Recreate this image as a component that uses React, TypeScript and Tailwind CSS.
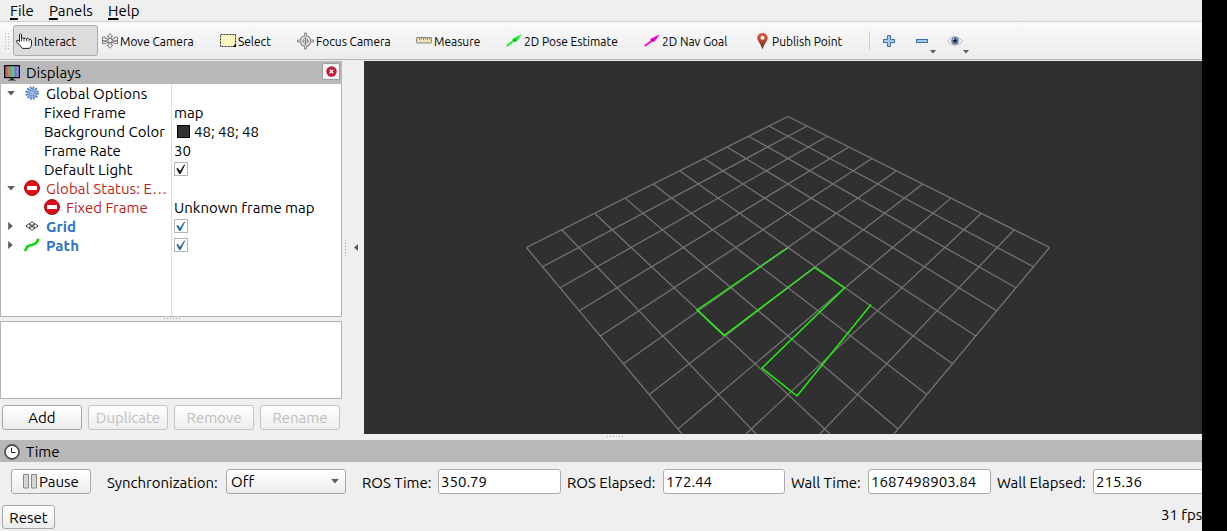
import React from "react";

const HORIZON = -202.5;
const DEPTH = 34.35;

function project(i: number, j: number): [number, number] {
  const d = DEPTH - (i + j);
  return [788 + ((i - j) * 636.8) / d - 364, HORIZON + 10957 / d - 61];
}

function line(a: [number, number], b: [number, number]) {
  return `M${a[0].toFixed(2)} ${a[1].toFixed(2)}L${b[0].toFixed(2)} ${b[1].toFixed(2)}`;
}

const steps = Array.from({ length: 11 }, (_, n) => n);
const gridPath = steps
  .map((n) => line(project(n, 0), project(n, 10)) + line(project(0, n), project(10, n)))
  .join("");

function Viewport() {
  return (
    <svg className="block h-[373px] w-[838px] bg-[#303030]" viewBox="0 0 838 373">
      <path d={gridPath} fill="none" stroke="#757575" strokeWidth="1.25" />
      <path
        d="M424 186.5L333 249L360 274.5L450.5 206.5L480.5 227L398 307L433 335L507 243.5"
        fill="none"
        stroke="#1ef80a"
        strokeWidth="1.4"
      />
      <path d="M424 186.5L393 207.8M418 231L450.5 206.5" stroke="#4fc843" strokeWidth="1.4" />
    </svg>
  );
}

function HandIcon() {
  return (
    <svg className="size-4 shrink-0" viewBox="0 0 16 16">
      <path d="M3.500 8.500V1.500Q4.500-.3 5.500 1.500V5.500Q7 4.300 8 5.500Q9.500 4.500 10.5 5.800Q12 5 13 6.200Q15.500 5.700 15.500 8V12.500L13.500 15.400H6.500L3.500 12L.7 9Q.2 6.600 2 7.200Z" fill="#fff" stroke="#222" strokeLinejoin="round" />
      <path d="M5.500 5.500v3M8 5.500V8.500M10.500 6v2.500M13 6.500v2" stroke="#222" strokeWidth=".8" />
    </svg>
  );
}

function MoveIcon() {
  return (
    <svg className="size-4 shrink-0" viewBox="0 0 16 16" fill="#f4f4f4" stroke="#707070" strokeWidth=".9">
      <path d="M8 .5L10.7 3.5H9.2V12H10.7L8 15.3L5.3 12H6.8V3.5H5.3Z" />
      <path d="M.5 4.2L3.5 4.2L3 5.2L8 7L13 5.2L12.5 4.2L15.5 4.2V8.5L14 8L8 10L2 8L.5 8.5Z" />
      <path d="M.5 10.8V7L3 8L8 6L13 8L15.5 7V10.8L12.5 10.3L8 8.5L3.5 10.3Z" fill="none" />
      <circle cx="8" cy="7.5" r="2.2" />
    </svg>
  );
}

function SelectIcon() {
  return (
    <svg className="size-4 shrink-0" viewBox="0 0 16 16">
      <rect x=".5" y="1.5" width="15" height="12" fill="#fff6bd" stroke="#333" strokeDasharray="2 1" />
      <path d="M12.5 14L16 10.5V14Z" fill="#000" />
    </svg>
  );
}

function FocusIcon() {
  return (
    <svg className="h-[18px] w-[17px] shrink-0" viewBox="0 0 17 18" fill="none" stroke="#8a8a8a">
      <circle cx="8.5" cy="9" r="5.2" strokeWidth="1.3" />
      <circle cx="8.5" cy="9" r="2.7" strokeWidth="1" />
      <path d="M8.5 5v8M4.5 9h8" />
      <path d="M7.5 4V1h2v3M7.5 14v3h2v-3M3.5 8h-3v2h3M13.5 8h3v2h-3" fill="#ddd" />
    </svg>
  );
}

function MeasureIcon() {
  return (
    <svg className="h-[7px] w-4 shrink-0" viewBox="0 0 16 7">
      <rect x=".5" y=".5" width="15" height="5.5" rx=".5" fill="#efe2ae" stroke="#858585" />
      <path d="M3.5 1v2M5.5 1v1.5M7.5 1v2M9.5 1v1.5M11.5 1v2M13.5 1v1.5" stroke="#777" strokeWidth=".8" />
    </svg>
  );
}

function ArrowIcon({ color, dark }: { color: string; dark: string }) {
  return (
    <svg className="h-[13px] w-4 shrink-0" viewBox="0 0 16 13">
      <path d="M.8 12L7.5 7" stroke={color} strokeWidth="2" />
      <path d="M16 .3L10.5 7.8L9 6.9L6 6.3L7 4.6Z" fill={color} />
      <path d="M7 6L9.5 5.2L9.5 7.6L8 7.4Z" fill={dark} />
    </svg>
  );
}

function PinIcon() {
  return (
    <svg className="h-4 w-[11px] shrink-0" viewBox="0 0 11 16">
      <defs>
        <linearGradient id="pin" x2="0" y2="1">
          <stop stopColor="#e0583a" />
          <stop offset=".5" stopColor="#b5482f" />
          <stop offset="1" stopColor="#4a3520" />
        </linearGradient>
      </defs>
      <path d="M5.5 0C2.5 0 .3 2.2.3 5C.3 8 4 11 5.2 15.8H5.8C7 11 10.7 8 10.7 5C10.7 2.2 8.5 0 5.5 0Z" fill="url(#pin)" />
      <circle cx="5.5" cy="4.8" r="2" fill="#fff" />
    </svg>
  );
}

function PlusIcon() {
  return (
    <svg className="size-3 shrink-0" viewBox="0 0 12 12">
      <path d="M4.5.5h3v4h4v3h-4v4h-3v-4h-4v-3h4z" fill="#a9c9ea" stroke="#3b6eae" />
    </svg>
  );
}

function MinusIcon() {
  return (
    <svg className="h-1 w-3 shrink-0" viewBox="0 0 12 4">
      <rect x=".5" y=".5" width="11" height="3" fill="#a9c9ea" stroke="#3b6eae" />
    </svg>
  );
}

function EyeIcon() {
  return (
    <svg className="h-[10px] w-4 shrink-0" viewBox="0 0 16 10">
      <path d="M.4 5Q8-4 15.6 5Q8 13.5 .4 5Z" fill="#f7f7f5" stroke="#aaa" strokeWidth=".9" />
      <circle cx="8" cy="4.8" r="3.5" fill="#6c7fbc" stroke="#52639b" strokeWidth=".6" />
      <circle cx="8" cy="4.8" r="1.7" fill="#11152b" />
      <circle cx="6.5" cy="3.3" r=".8" fill="#dfe5ff" />
    </svg>
  );
}

function Triangle({ className, d = "M0 0H6L3 3.6Z", box = "0 0 6 4" }: { className: string; d?: string; box?: string }) {
  return (
    <svg className={className} viewBox={box}>
      <path d={d} fill="#5a5a5a" />
    </svg>
  );
}

function MonitorIcon() {
  return (
    <svg className="size-4" viewBox="0 0 16 16">
      <defs>
        <linearGradient id="screen">
          <stop stopColor="#a94e4e" />
          <stop offset=".33" stopColor="#d08080" />
          <stop offset=".36" stopColor="#58a868" />
          <stop offset=".64" stopColor="#80c88c" />
          <stop offset=".68" stopColor="#6d6dc4" />
          <stop offset="1" stopColor="#9b9be0" />
        </linearGradient>
      </defs>
      <rect x=".6" y=".6" width="14.8" height="12" fill="url(#screen)" stroke="#080808" strokeWidth="1.2" />
      <path d="M6.5 13h3v1.2l3 1.3h-9l3-1.3z" fill="#222" />
    </svg>
  );
}

function GearIcon() {
  return (
    <svg className="mb-px size-[14px]" viewBox="0 0 14 14" fill="none">
      <circle cx="7" cy="7" r="5.7" stroke="#4f81bd" strokeWidth="2.2" strokeDasharray="1.7 1.284" />
      <circle cx="7" cy="7" r="4.7" fill="#a3c5ea" stroke="#5a8ac6" strokeWidth=".9" />
      <circle cx="7" cy="7" r="2.9" stroke="#4477b5" strokeWidth="1.1" strokeDasharray="1.3 .98" />
      <circle cx="7" cy="7" r="1.2" fill="#f4f8fd" stroke="#5584bf" strokeWidth=".7" />
    </svg>
  );
}

function ErrorIcon() {
  return (
    <svg className="size-4" viewBox="0 0 16 16">
      <circle cx="8" cy="8" r="7.5" fill="#dc1018" stroke="#a8080e" />
      <rect x="3" y="6" width="10" height="4" rx=".6" fill="#fff" />
    </svg>
  );
}

function GridIcon() {
  return (
    <svg className="h-[10px] w-[14px]" viewBox="0 0 14 10" fill="none" stroke="#444" strokeWidth="1">
      <path d="M.8 5L7 .8L13.2 5L7 9.2ZM3.9 2.9L10.1 7.1M10.1 2.9L3.9 7.1" />
      <path d="M4 5L7 3L10 5L7 7Z" strokeWidth=".5" />
    </svg>
  );
}

function PathIcon() {
  return (
    <svg className="h-[14px] w-4" viewBox="0 0 16 14" fill="none" stroke="#0bd80b" strokeWidth="2.7">
      <path d="M1.200 13C2.200 8.500 4.5 7.5 7.5 7C11.5 6.4 13 5 14.5 .8" />
    </svg>
  );
}

function Check({ color }: { color: string }) {
  return (
    <svg className="mb-[2px] size-[14px]" viewBox="0 0 14 14">
      <rect x=".5" y=".5" width="13" height="13" fill="#fff" stroke="#b4b4b4" />
      <path d="M3.4 6L6 9.5L10.6 2.8L6.4 11.6H5.4L3 7Z" fill={color} stroke={color} strokeWidth=".9" />
    </svg>
  );
}

type Row = {
  arrow?: "down" | "right";
  icon?: React.ReactNode;
  label: string;
  labelClass: string;
  value?: React.ReactNode;
};

const rows: Row[] = [
  { arrow: "down", icon: <GearIcon />, label: "Global Options", labelClass: "pl-[45px] text-black tracking-[0.07px]" },
  { label: "Fixed Frame", labelClass: "pl-[43px] text-black", value: "map" },
  {
    label: "Background Color",
    labelClass: "pl-[43px] text-black tracking-[0.05px]",
    value: (
      <span className="flex items-center gap-1 pl-[3px]">
        <span className="size-[13px] border border-black bg-[#303030]" />
        <span>48; 48; 48</span>
      </span>
    ),
  },
  { label: "Frame Rate", labelClass: "pl-[43px] text-black", value: "30" },
  { label: "Default Light", labelClass: "pl-[43px] text-black", value: <Check color="#111" /> },
  { arrow: "down", icon: <ErrorIcon />, label: "Global Status: E…", labelClass: "pl-[45px] text-[#c41e20] tracking-[0.1px]" },
  { label: "Fixed Frame", labelClass: "gap-[6px] pl-[43px] text-[#c41e20]", value: "Unknown frame map" },
  { arrow: "right", icon: <GridIcon />, label: "Grid", labelClass: "pl-[45px] font-bold text-[#2a76c6] tracking-[0.1px]", value: <Check color="#2465a4" /> },
  { arrow: "right", icon: <PathIcon />, label: "Path", labelClass: "pl-[45px] font-bold text-[#2a76c6] tracking-[0.1px]", value: <Check color="#2465a4" /> },
];

function TreeRow({ row, nestedError }: { row: Row; nestedError: boolean }) {
  return (
    <div className="flex h-[19px] shrink-0">
      <div className={`relative flex w-[170px] shrink-0 items-center ${row.labelClass}`}>
        {row.arrow === "down" && <Triangle className="absolute left-[6px] top-[7px] h-[5px] w-2" />}
        {row.arrow === "right" && (
          <Triangle className="absolute left-[7px] top-[5px] h-2 w-[5px]" d="M0 0L4 3.5L0 7Z" box="0 0 4 7" />
        )}
        {row.icon && (
          <span className="absolute left-[22px] top-0 flex h-[18px] w-[18px] items-center justify-center">{row.icon}</span>
        )}
        {nestedError && <span className="mb-[2px]"><ErrorIcon /></span>}
        <span>{row.label}</span>
      </div>
      <div className="flex items-center border-l border-[#dcdcdc] pl-[2px]">{row.value}</div>
    </div>
  );
}

function Dots({ className }: { className: string }) {
  return (
    <div className={`flex ${className}`}>
      {[0, 1, 2, 3, 4, 5].map((n) => (
        <span key={n} className="size-px bg-[#a5a5a5]" />
      ))}
    </div>
  );
}

const buttonBase =
  "flex items-center rounded-[3px] border bg-linear-to-b from-white to-[#ededed]";

const mnemonic = "underline decoration-[1.5px] underline-offset-2";

function Tool({ icon, label, className }: { icon: React.ReactNode; label: string; className: string }) {
  return (
    <div className={`flex h-[31px] shrink-0 items-center ${className}`}>
      {icon}
      <span className="origin-left scale-x-[0.92] pt-px">{label}</span>
    </div>
  );
}

function Field({ label, value, labelClass, inputClass }: { label: string; value: string; labelClass: string; inputClass: string }) {
  return (
    <>
      <span className={`shrink-0 pt-[2px] ${labelClass}`}>{label}</span>
      <div className={`flex h-[25px] shrink-0 items-center rounded-[3px] border border-[#ababab] bg-white pl-[2px] ${inputClass}`}>
        {value}
      </div>
    </>
  );
}

export default function App() {
  return (
    <div className="flex h-[531px] w-[1227px] overflow-hidden whitespace-nowrap bg-black font-['Ubuntu','Noto_Sans',sans-serif] text-[15px] leading-[19px] text-black">
      <div className="flex w-[1202px] flex-col overflow-hidden bg-[#efefef]">
        <nav className="flex h-[22px] shrink-0 items-center border-b border-[#d2d2d2] pl-[10px]">
          <span className="w-[39px]"><span className={mnemonic}>F</span>ile</span>
          <span className="w-[59px]"><span className={mnemonic}>P</span>anels</span>
          <span><span className={mnemonic}>H</span>elp</span>
        </nav>

        <div className="flex h-[38px] shrink-0 items-center border-b border-[#b3b3b3] bg-linear-to-b from-[#fafafa] to-[#ececec] text-[13px]">
          <div className="grid w-[13px] shrink-0 grid-cols-2 gap-x-[2px] gap-y-[2px] pl-[5px] pr-[4px]">
            {Array.from({ length: 12 }, (_, n) => (
              <span key={n} className="size-px bg-[#b5b5b5]" />
            ))}
          </div>
          <Tool icon={<HandIcon />} label="Interact" className="w-[85px] gap-[2px] rounded-[3px] border border-[#ababab] bg-[#dcdcdc] pl-[2px]" />
          <Tool icon={<MoveIcon />} label="Move Camera" className="w-[122px] gap-[2px] pl-1" />
          <Tool icon={<SelectIcon />} label="Select" className="w-[77px] gap-[2px]" />
          <Tool icon={<FocusIcon />} label="Focus Camera" className="w-[119px] gap-[2px]" />
          <Tool icon={<MeasureIcon />} label="Measure" className="w-[90px] gap-[2px]" />
          <Tool icon={<ArrowIcon color="#12ef25" dark="#087e16" />} label="2D Pose Estimate" className="w-[138px] gap-[2px]" />
          <Tool icon={<ArrowIcon color="#f708df" dark="#850a79" />} label="2D Nav Goal" className="w-[113px] gap-[2px]" />
          <Tool icon={<PinIcon />} label="Publish Point" className="w-[112px] gap-1" />
          <div className="h-[19px] w-px bg-[#cfcfcf]" />
          <div className="flex w-[46px] pl-[13px]"><PlusIcon /></div>
          <div className="relative flex h-6 w-[31px] items-center">
            <MinusIcon />
            <Triangle className="absolute bottom-[-1px] left-[14px] h-[4px] w-[6px]" />
          </div>
          <div className="relative flex h-6 w-8 items-center">
            <EyeIcon />
            <Triangle className="absolute bottom-[-1px] left-[16px] h-[4px] w-[6px]" />
          </div>
        </div>

        <div className="flex h-[380px] shrink-0 pt-px">
          <aside className="flex w-[342px] shrink-0 flex-col">
            <div className="flex h-[23px] items-center bg-[#b8b8b8] pl-1">
              <MonitorIcon />
              <span className="ml-[6px]">Displays</span>
              <div className="mr-[2px] mb-[2px] ml-auto flex h-[17px] w-[18px] items-center justify-center rounded-[2px] border border-[#9d9d9d] bg-[#f5f5f5]">
                <svg className="size-[11px]" viewBox="0 0 11 11">
                  <circle cx="5.5" cy="5.5" r="5.2" fill="#c91837" />
                  <path d="M3.8 3.8l3.4 3.4M7.2 3.8L3.8 7.2" stroke="#fff" strokeWidth="1.4" />
                </svg>
              </div>
            </div>
            <div className="flex h-[233px] flex-col border border-t-0 border-[#b4b4b4] bg-white">
              {rows.map((row, n) => (
                <TreeRow key={n} row={row} nestedError={n === 6} />
              ))}
              <div className="ml-[170px] flex-1 border-l border-[#dcdcdc]" />
            </div>
            <Dots className="mb-px h-[3px] items-center gap-[2px] pl-[164px]" />
            <div className="h-[78px] border border-[#b4b4b4] bg-white" />
            <div className="flex gap-[6px] px-[2px] pt-[6px]">
              <div className={`${buttonBase} h-[25px] w-20 justify-center border-[#a8a8a8]`}>Add</div>
              <div className={`${buttonBase} h-[25px] w-20 justify-center border-[#c5c5c5] text-[#bfbfbf]`}>Duplicate</div>
              <div className={`${buttonBase} h-[25px] w-20 justify-center border-[#c5c5c5] text-[#bfbfbf]`}>Remove</div>
              <div className={`${buttonBase} h-[25px] w-20 justify-center border-[#c5c5c5] text-[#bfbfbf]`}>Rename</div>
            </div>
          </aside>
          <div className="flex w-[22px] shrink-0 items-center gap-2 pb-[6px] pl-[3px]">
            <Dots className="flex-col gap-[2px]" />
            <Triangle className="h-[7px] w-1" d="M4 0L0 3.5L4 7Z" box="0 0 4 7" />
          </div>
          <main className="w-[838px] shrink-0">
            <Viewport />
            <Dots className="h-1 items-center gap-[2px] pl-[243px]" />
          </main>
        </div>

        <div className="flex h-[22px] shrink-0 items-center bg-[#b8b8b8] pl-1">
          <svg className="mt-px size-4" viewBox="0 0 16 16">
            <circle cx="8" cy="8" r="7" fill="#fff" stroke="#555" strokeWidth="1.8" />
            <path d="M7.5 3.8V8.5H11.5" fill="none" stroke="#222" />
          </svg>
          <span className="ml-[6px]">Time</span>
        </div>
        <div className="flex h-[39px] shrink-0 items-center pl-[11px]">
          <div className={`${buttonBase} h-[25px] w-20 shrink-0 gap-[2px] border-[#a8a8a8] pl-[11px]`}>
            <svg className="h-[15px] w-[14px]" viewBox="0 0 14 15" fill="#d5d6d2" stroke="#888a85">
              <path d="M.5.5h5v13.5h-5zM8.5.5h5v13.5h-5z" />
            </svg>
            Pause
          </div>
          <span className="ml-4 w-[119px] shrink-0 pt-[2px]">Synchronization:</span>
          <div className={`${buttonBase} h-[25px] w-[120px] shrink-0 justify-between border-[#a8a8a8] pr-[6px] pl-1`}>
            Off
            <Triangle className="h-[5px] w-2" />
          </div>
          <Field label="ROS Time:" value="350.79" labelClass="ml-4 w-[76px]" inputClass="w-[123px]" />
          <Field label="ROS Elapsed:" value="172.44" labelClass="ml-[6px] w-[96px]" inputClass="w-[122px]" />
          <Field label="Wall Time:" value="1687498903.84" labelClass="ml-[6px] w-[77px]" inputClass="w-[123px]" />
          <Field label="Wall Elapsed:" value="215.36" labelClass="ml-[6px] w-[96px]" inputClass="w-[123px]" />
        </div>
        <div className="flex h-[30px] shrink-0 items-start justify-between pt-1 pl-[2px]">
          <div className={`${buttonBase} h-6 w-[53px] justify-center border-[#a8a8a8]`}>Reset</div>
          <span className="w-[41px]">31 fps</span>
        </div>
      </div>
    </div>
  );
}
